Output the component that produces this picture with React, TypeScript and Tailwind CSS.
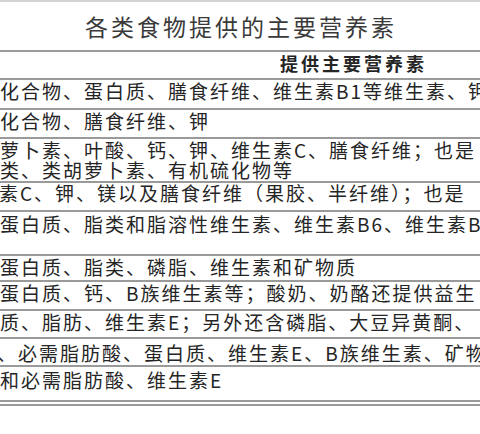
const ROWS: { h: string; pt: string; lines: string[]; shift?: string }[] = [
  { h: 'h-[30px]', pt: 'pt-[1px]', lines: ['化合物、蛋白质、膳食纤维、维生素B1等维生素、钾'] },
  { h: 'h-[29px]', pt: 'pt-[1px]', lines: ['化合物、膳食纤维、钾'] },
  { h: 'h-[44px]', pt: 'pt-[1px]', lines: ['萝卜素、叶酸、钙、钾、维生素C、膳食纤维；也是', '类、类胡萝卜素、有机硫化物等'] },
  { h: 'h-[29px]', pt: 'pt-0', lines: ['素C、钾、镁以及膳食纤维（果胶、半纤维）；也是'], shift: '-ml-[1px]' },
  { h: 'h-[44px]', pt: 'pt-[2px]', lines: ['蛋白质、脂类和脂溶性维生素、维生素B6、维生素B'] },
  { h: 'h-[26px]', pt: 'pt-[1px]', lines: ['蛋白质、脂类、磷脂、维生素和矿物质'] },
  { h: 'h-[29px]', pt: 'pt-[1px]', lines: ['蛋白质、钙、B族维生素等；酸奶、奶酪还提供益生'] },
  { h: 'h-[28px]', pt: 'pt-[1px]', lines: ['质、脂肪、维生素E；另外还含磷脂、大豆异黄酮、'] },
  { h: 'h-[28px]', pt: 'pt-[4px]', lines: ['、必需脂肪酸、蛋白质、维生素E、B族维生素、矿物'], shift: '-ml-[3px]' },
  { h: 'h-[35px]', pt: 'pt-[3px]', lines: ['和必需脂肪酸、维生素E'] },
  { h: 'h-[4px]', pt: 'pt-0', lines: [] },
]

export default function App() {
  return (
    <div
      className="w-[480px] h-[434px] overflow-hidden bg-white text-[#252525]"
      style={{ fontFamily: '"Noto Sans CJK SC", "Noto Sans", sans-serif' }}
    >
      <div className="border-t-2 border-[#d4d4d4]">
        {/* title */}
        <div className="h-[50px] border-b-2 border-[#9a9a9a] flex items-center justify-center">
          <span className="text-[23px] leading-[26px] tracking-[3px] text-[#3a3a3a] pl-[2px]">各类食物提供的主要营养素</span>
        </div>

        {/* header */}
        <div className="h-[28px] pt-[1px] border-b-2 border-[#9a9a9a]">
          <span className="block ml-[280px] text-[18px] leading-[20px] tracking-[3px] font-bold whitespace-nowrap">提供主要营养素</span>
        </div>

        {ROWS.map((r, i) => (
          <div key={i} className={`${r.h} ${r.pt} border-b-2 border-[#9a9a9a] overflow-hidden`}>
            {r.lines.map((l, j) => (
              <div key={j} className={`text-[19px] leading-[20px] tracking-[2px] whitespace-nowrap ${r.shift ?? ''}`}>
                {l}
              </div>
            ))}
          </div>
        ))}
      </div>
    </div>
  )
}
